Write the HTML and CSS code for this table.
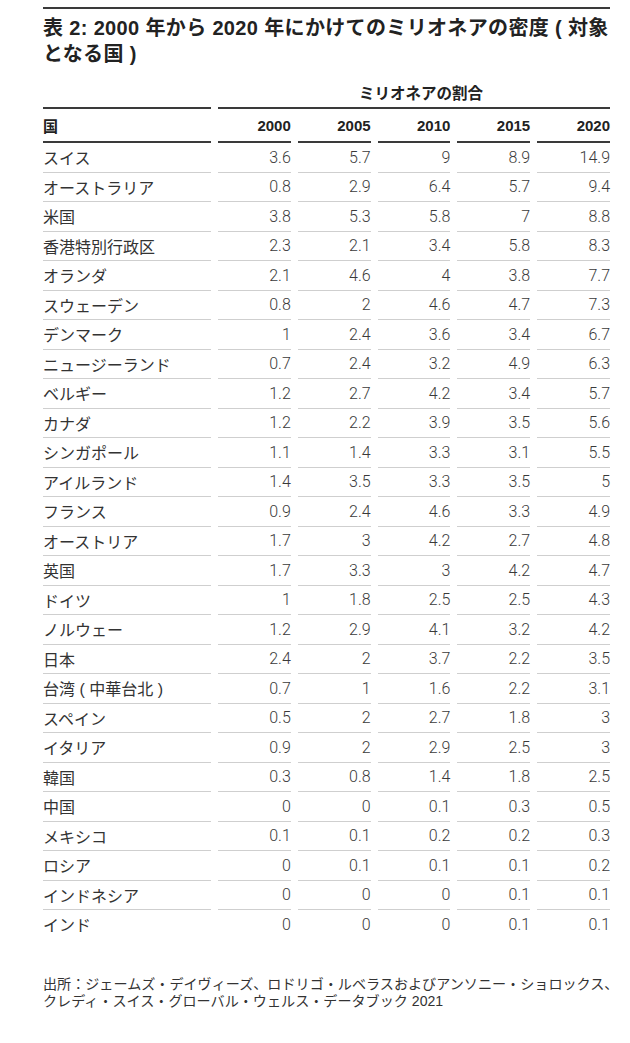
FILE: index.html
```html
<!DOCTYPE html>
<html lang="ja">
<head>
<meta charset="utf-8">
<link rel="stylesheet" href="styles.css">
</head>
<body>
<div class="page">
  <h1 class="title">表 2: 2000 年から 2020 年にかけてのミリオネアの密度 ( 対象<br>となる国 )</h1>
  <table class="data">
    <thead>
      <tr class="super">
        <th class="c-name"></th>
        <th colspan="5" class="super-label"><span>ミリオネアの割合</span></th>
      </tr>
      <tr class="head">
        <th class="c-name">国</th>
        <th>2000</th><th>2005</th><th>2010</th><th>2015</th><th>2020</th>
      </tr>
    </thead>
    <tbody>
      <tr><td class="c-name">スイス</td><td>3.6</td><td>5.7</td><td>9</td><td>8.9</td><td>14.9</td></tr>
      <tr><td class="c-name">オーストラリア</td><td>0.8</td><td>2.9</td><td>6.4</td><td>5.7</td><td>9.4</td></tr>
      <tr><td class="c-name">米国</td><td>3.8</td><td>5.3</td><td>5.8</td><td>7</td><td>8.8</td></tr>
      <tr><td class="c-name">香港特別行政区</td><td>2.3</td><td>2.1</td><td>3.4</td><td>5.8</td><td>8.3</td></tr>
      <tr><td class="c-name">オランダ</td><td>2.1</td><td>4.6</td><td>4</td><td>3.8</td><td>7.7</td></tr>
      <tr><td class="c-name">スウェーデン</td><td>0.8</td><td>2</td><td>4.6</td><td>4.7</td><td>7.3</td></tr>
      <tr><td class="c-name">デンマーク</td><td>1</td><td>2.4</td><td>3.6</td><td>3.4</td><td>6.7</td></tr>
      <tr><td class="c-name">ニュージーランド</td><td>0.7</td><td>2.4</td><td>3.2</td><td>4.9</td><td>6.3</td></tr>
      <tr><td class="c-name">ベルギー</td><td>1.2</td><td>2.7</td><td>4.2</td><td>3.4</td><td>5.7</td></tr>
      <tr><td class="c-name">カナダ</td><td>1.2</td><td>2.2</td><td>3.9</td><td>3.5</td><td>5.6</td></tr>
      <tr><td class="c-name">シンガポール</td><td>1.1</td><td>1.4</td><td>3.3</td><td>3.1</td><td>5.5</td></tr>
      <tr><td class="c-name">アイルランド</td><td>1.4</td><td>3.5</td><td>3.3</td><td>3.5</td><td>5</td></tr>
      <tr><td class="c-name">フランス</td><td>0.9</td><td>2.4</td><td>4.6</td><td>3.3</td><td>4.9</td></tr>
      <tr><td class="c-name">オーストリア</td><td>1.7</td><td>3</td><td>4.2</td><td>2.7</td><td>4.8</td></tr>
      <tr><td class="c-name">英国</td><td>1.7</td><td>3.3</td><td>3</td><td>4.2</td><td>4.7</td></tr>
      <tr><td class="c-name">ドイツ</td><td>1</td><td>1.8</td><td>2.5</td><td>2.5</td><td>4.3</td></tr>
      <tr><td class="c-name">ノルウェー</td><td>1.2</td><td>2.9</td><td>4.1</td><td>3.2</td><td>4.2</td></tr>
      <tr><td class="c-name">日本</td><td>2.4</td><td>2</td><td>3.7</td><td>2.2</td><td>3.5</td></tr>
      <tr><td class="c-name">台湾 ( 中華台北 )</td><td>0.7</td><td>1</td><td>1.6</td><td>2.2</td><td>3.1</td></tr>
      <tr><td class="c-name">スペイン</td><td>0.5</td><td>2</td><td>2.7</td><td>1.8</td><td>3</td></tr>
      <tr><td class="c-name">イタリア</td><td>0.9</td><td>2</td><td>2.9</td><td>2.5</td><td>3</td></tr>
      <tr><td class="c-name">韓国</td><td>0.3</td><td>0.8</td><td>1.4</td><td>1.8</td><td>2.5</td></tr>
      <tr><td class="c-name">中国</td><td>0</td><td>0</td><td>0.1</td><td>0.3</td><td>0.5</td></tr>
      <tr><td class="c-name">メキシコ</td><td>0.1</td><td>0.1</td><td>0.2</td><td>0.2</td><td>0.3</td></tr>
      <tr><td class="c-name">ロシア</td><td>0</td><td>0.1</td><td>0.1</td><td>0.1</td><td>0.2</td></tr>
      <tr><td class="c-name">インドネシア</td><td>0</td><td>0</td><td>0</td><td>0.1</td><td>0.1</td></tr>
      <tr class="last"><td class="c-name">インド</td><td>0</td><td>0</td><td>0</td><td>0.1</td><td>0.1</td></tr>
    </tbody>
  </table>
  <p class="source">出所：ジェームズ・デイヴィーズ、ロドリゴ・ルベラスおよびアンソニー・ショロックス、<br>クレディ・スイス・グローバル・ウェルス・データブック 2021</p>
</div>
</body>
</html>
```

FILE: styles.css
```css
html, body {
  margin: 0;
  padding: 0;
  background: #ffffff;
}

body {
  font-family: "Liberation Sans", "Noto Sans CJK JP", sans-serif;
  color: #2a2a2a;
}

.page {
  width: 567px;
  margin: 0 0 0 43px;
  padding-top: 7px;
}

.title {
  margin: 0;
  border-top: 2px solid #3a3a3a;
  padding-top: 6px;
  font-size: 20px;
  line-height: 26px;
  font-weight: 700;
  color: #222;
  letter-spacing: 0.35px;
  white-space: nowrap;
}

.data {
  border-collapse: separate;
  border-spacing: 7px 0;
  margin: 14px -7px 0 -7px;
  width: 581px;
  table-layout: fixed;
}

.data th,
.data td {
  padding: 0;
  text-align: right;
  white-space: nowrap;
}

.data .c-name {
  width: 168px;
  text-align: left;
}

.super th {
  height: 26px;
  vertical-align: top;
  border-bottom: 2px solid #3a3a3a;
  font-size: 15.5px;
  font-weight: 700;
  color: #222;
}

.super .super-label {
  text-align: center;
  padding-left: 14px;
}

.head th {
  height: 32px;
  border-bottom: 2px solid #3a3a3a;
  font-size: 15px;
  font-weight: 700;
  color: #222;
  vertical-align: middle;
}

.data tbody td {
  height: 28.5px;
  border-bottom: 1px solid #cfcfcf;
  font-size: 16px;
  color: #333;
  vertical-align: middle;
}

.data tbody td:not(.c-name) {
  font-family: "Roboto", "Liberation Sans", sans-serif;
  font-weight: 300;
  color: #3a3a3a;
}

.data tbody tr.last td {
  border-bottom: none;
}

.source {
  margin: 37px 0 0 0;
  font-size: 14.1px;
  line-height: 17px;
  color: #333;
  white-space: nowrap;
}
```
